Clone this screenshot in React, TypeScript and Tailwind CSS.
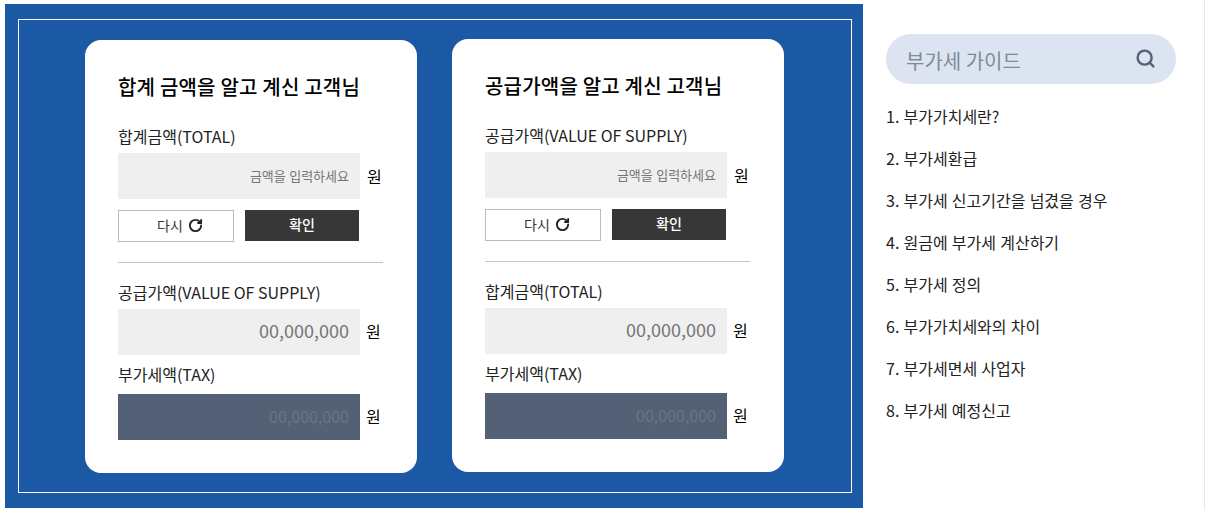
import { RotateCw, Search } from "lucide-react";

const guides = [
  "1. 부가가치세란?",
  "2. 부가세환급",
  "3. 부가세 신고기간을 넘겼을 경우",
  "4. 원금에 부가세 계산하기",
  "5. 부가세 정의",
  "6. 부가가치세와의 차이",
  "7. 부가세면세 사업자",
  "8. 부가세 예정신고",
];

function AmountRow({ text, kind }: { text: string; kind: "hint" | "value" | "tax" }) {
  return (
    <div className="flex items-center">
      <div
        className={
          kind === "tax"
            ? "flex h-[46px] w-[242px] items-center justify-end bg-[#536076] pr-[11px] pb-[2px] text-[16px] text-[#6c7481]"
            : kind === "value"
              ? "flex h-[46px] w-[242px] items-center justify-end bg-[#efefef] pr-[11px] pb-[3px] text-[18px] text-[#757575]"
              : "flex h-[46px] w-[242px] items-center justify-end bg-[#efefef] pr-[11px] pb-[1px] text-[13px] [word-spacing:0.5px] text-[#757575]"
        }
      >
        {text}
      </div>
      <span className={kind === "hint" ? "ml-[7px] text-[16px] text-black" : "ml-[6px] pb-[2px] text-[16px] text-black"}>원</span>
    </div>
  );
}

function CalcCard({ title, first, second, offset }: { title: string; first: string; second: string; offset?: boolean }) {
  return (
    <div className={offset ? "mt-px h-[433px] w-[332px] rounded-[16px] bg-white px-[33px] pt-[32px]" : "h-[433px] w-[332px] rounded-[16px] bg-white px-[33px] pt-[32px]"}>
      <h2 className="text-[20px] leading-[30px] font-medium tracking-[0.2px] text-black">{title}</h2>
      <div className="mt-[22px] text-[16px] leading-[24px] text-[#222]">{first}</div>
      <div className="mt-[5px]">
        <AmountRow text="금액을 입력하세요" kind="hint" />
      </div>
      <div className="mt-[11px] flex items-start gap-[11px]">
        <button className="flex h-[32px] w-[116px] items-center justify-center gap-[5px] border border-[#bbb] bg-white pl-[8px] pb-[1px] text-[14px] text-[#333]">
          다시
          <RotateCw size={15} strokeWidth={3} className="text-[#222]" />
        </button>
        <button className="h-[31px] w-[114px] bg-[#373737] pb-[3px] text-[14px] font-medium text-white">확인</button>
      </div>
      <div className="mt-[20px] h-px w-[265px] bg-[#c4c4c4]" />
      <div className="mt-[17px] text-[16px] leading-[24px] text-[#222]">{second}</div>
      <div className="mt-[5px]">
        <AmountRow text="00,000,000" kind="value" />
      </div>
      <div className="mt-[7px] text-[16px] leading-[24px] text-[#222]">부가세액(TAX)</div>
      <div className="mt-[8px]">
        <AmountRow text="00,000,000" kind="tax" />
      </div>
    </div>
  );
}

export default function App() {
  return (
    <div className="flex h-[514px] w-[1214px] bg-white pt-[4px] pl-[5px] font-['Noto_Sans_CJK_KR','Noto_Sans',sans-serif]">
      <div className="h-[504px] w-[858px] bg-[#1c59a5] px-[13px] pt-[15px]">
        <div className="flex h-[474px] w-[834px] items-start gap-[35px] border border-white pt-[19px] pl-[66px]">
          <CalcCard offset title="합계 금액을 알고 계신 고객님" first="합계금액(TOTAL)" second="공급가액(VALUE OF SUPPLY)" />
          <CalcCard title="공급가액을 알고 계신 고객님" first="공급가액(VALUE OF SUPPLY)" second="합계금액(TOTAL)" />
        </div>
      </div>
      <aside className="h-[510px] w-[342px] -translate-y-[4px] border-r border-[#e8e8e8] pt-[34px] pl-[23px]">
        <div className="flex h-[50px] w-[290px] items-center justify-between rounded-full bg-[#dbe4f0] pr-[20px] pl-[20px]">
          <span className="pt-[3px] text-[20px] text-[#7f8a99]">부가세 가이드</span>
          <Search size={21} strokeWidth={2.8} className="-mt-[2px] text-[#536076]" />
        </div>
        <ul className="mt-[11px]">
          {guides.map((g) => (
            <li key={g} className="flex h-[42px] items-center text-[16px] [word-spacing:0.6px] text-[#222]">
              {g}
            </li>
          ))}
        </ul>
      </aside>
    </div>
  );
}
